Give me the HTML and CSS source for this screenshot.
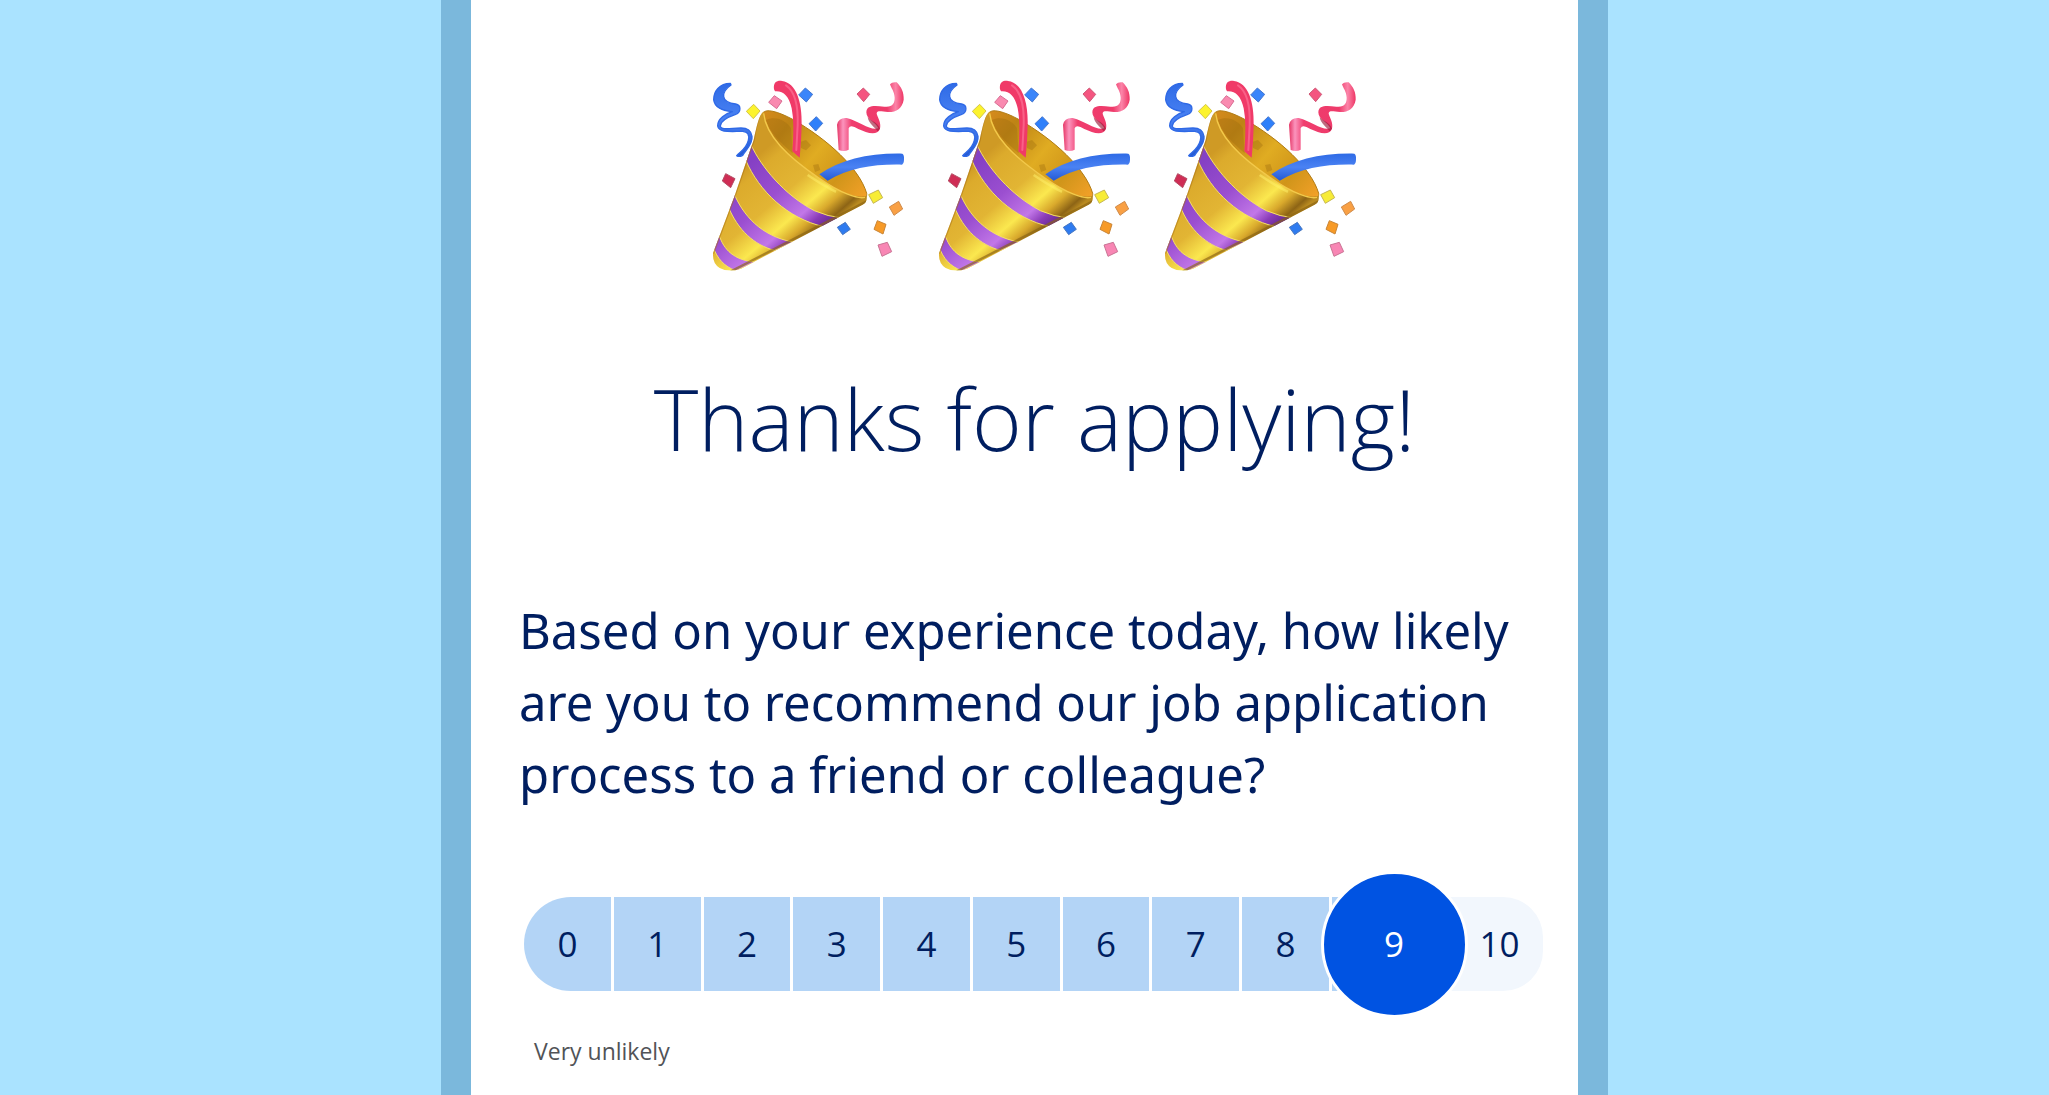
FILE: index.html
```html
<!DOCTYPE html>
<html lang="en">
<head>
<meta charset="utf-8">
<meta name="viewport" content="width=device-width, initial-scale=1">
<title>Thanks for applying!</title>
<link rel="stylesheet" href="styles.css">
</head>
<body>
<svg class="defs" aria-hidden="true">
  <defs>
    <linearGradient id="gold" gradientUnits="userSpaceOnUse" x1="150" y1="330" x2="350" y2="560">
      <stop offset="0" stop-color="#cf9a25"/><stop offset=".12" stop-color="#dcab2c"/><stop offset=".45" stop-color="#e2b534"/><stop offset=".68" stop-color="#fbe84f"/><stop offset=".82" stop-color="#d9a92c"/><stop offset=".94" stop-color="#8d6415"/><stop offset="1" stop-color="#b98a20"/>
    </linearGradient>
    <linearGradient id="violet" gradientUnits="userSpaceOnUse" x1="150" y1="330" x2="350" y2="560">
      <stop offset="0" stop-color="#8540c4"/><stop offset=".4" stop-color="#9b4fd0"/><stop offset=".72" stop-color="#c277e8"/><stop offset=".85" stop-color="#8a3bb8"/><stop offset="1" stop-color="#5c2585"/>
    </linearGradient>
    <linearGradient id="inside" gradientUnits="userSpaceOnUse" x1="220" y1="160" x2="520" y2="410">
      <stop offset="0" stop-color="#d48a1c"/><stop offset=".2" stop-color="#bd8315"/><stop offset=".5" stop-color="#e0ac22"/><stop offset=".75" stop-color="#d0951a"/><stop offset="1" stop-color="#f2a028"/>
    </linearGradient>
    <linearGradient id="pink" x1="0" x2="1" y1="0" y2="0">
      <stop offset="0" stop-color="#e53565"/><stop offset=".09" stop-color="#fb94bd"/><stop offset=".22" stop-color="#f03d6e"/><stop offset=".75" stop-color="#ee3a6a"/><stop offset=".88" stop-color="#fb84a8"/><stop offset="1" stop-color="#ee3564"/>
    </linearGradient>
    <linearGradient id="blue" x1="0" x2="0" y1="0" y2="1">
      <stop offset="0" stop-color="#2f6be6"/><stop offset=".5" stop-color="#4a82f3"/><stop offset="1" stop-color="#2459d4"/>
    </linearGradient>
    <clipPath id="cone"><path d="M218 154C204 166 198 195 188 240L130 410L66 580Q64 610 86 624Q112 638 150 626L515 434Q530 426 527 408C490 420 430 385 385 355C300 298 228 230 218 154Z"/></clipPath>
    <symbol id="popper" viewBox="15 0 678 690">
      <path fill="url(#inside)" stroke="#b17c15" stroke-width="3" d="M216 160C222 144 260 154 305 178C410 238 505 325 527 400C530 432 480 418 385 356C290 292 218 226 216 160Z"/>
      <path fill="#9c6a0e" opacity=".35" d="M330 245L345 240L360 256L345 271L330 264ZM366 315L382 312L388 330L372 336ZM225 180C255 165 290 185 300 205L305 280C265 245 235 215 225 180Z"/>
      <g clip-path="url(#cone)">
        <path fill="url(#gold)" d="M50 140H540V650H50Z"/>
        <path fill="url(#violet)" stroke="#f5df69" stroke-width="3" d="M180 254C210 320 280 405 370 452Q410 470 455 474L398 500C290 475 205 395 164 300Z"/>
        <path fill="url(#violet)" stroke="#f5df69" stroke-width="3" d="M128 398C155 465 210 528 305 546L250 571C190 555 140 510 112 440Z"/>
        <path fill="url(#violet)" stroke="#f5df69" stroke-width="3" d="M84 524C98 570 130 600 190 606L135 632C100 620 78 595 66 560Z"/>
        <path fill="none" stroke="#8a6414" stroke-width="7" opacity=".65" d="M120 634L527 424"/>
        <path fill="none" stroke="#a56d14" stroke-width="7" opacity=".5" d="M210 155Q194 190 188 240L130 410L66 580"/>
        <path fill="none" stroke="#fff06a" stroke-width="8" opacity=".5" d="M350 345Q410 385 435 395"/>
      </g>
      <path fill="none" stroke="#f3c94a" stroke-width="4" d="M218 160C225 228 290 290 385 355C450 400 500 418 522 412"/>
      <path fill="#f03a68" d="M249 88C246 66 259 61 273 63C315 68 334 125 332 195Q331 245 326 293L304 274Q311 190 302 145C294 108 277 92 252 94Z"/>
      <path fill="none" stroke="#ff7a9d" stroke-width="6" opacity=".6" stroke-linecap="round" d="M285 76C313 95 322 135 320 195L316 270"/>
      <path fill="url(#blue)" d="M385 343C450 298 535 279 634 281Q640 284 639 298Q639 311 633 314C550 312 475 324 410 362Z"/>
      <path fill="url(#blue)" stroke="#2f69e6" stroke-width="4" stroke-linejoin="round" d="M118 70C85 70 68 95 68 119C71 143 92 152 124 155C105 160 79 176 80 198C83 219 120 214 155 214C169 215 176 223 172 241C166 266 149 274 137 287Q144 292 155 286C166 268 186 251 183 229C180 210 170 204 150 204C122 204 89 212 88 198C88 181 114 170 134 163C151 156 151 135 134 132C112 130 100 124 98 110C96 94 107 84 120 75Z"/>
      <path fill="url(#pink)" d="M438 194Q443 172 467 174C506 184 538 213 562 205C555 188 526 178 526 157C527 135 549 137 580 140C604 143 612 130 611 112C610 94 601 86 597 73Q603 65 617 67C631 81 639 97 638 119C634 146 614 157 591 156C570 154 557 150 557 161C562 177 571 188 567 206C558 229 528 219 502 207Q478 192 473 205L473 269Q460 276 443 270Z"/>
      <path fill="#9d1d3c" opacity=".65" d="M530 171C540 184 561 187 567 206L560 214C552 202 532 190 530 171Z"/>
      <g stroke-linejoin="round" stroke-width="3">
        <path fill="#f98ab0" stroke="#d96d93" d="M233 127L250 107L273 123L257 146Z"/>
        <path fill="#3a85fa" stroke="#4476cf" d="M323 105L343 84L365 103L346 126Z"/>
        <path fill="#2f80fa" stroke="#4476cf" d="M354 191L376 170L395 190L374 213Z"/>
        <path fill="#fcf32e" stroke="#d5c64a" d="M166 154L188 133L207 153L187 176Z"/>
        <path fill="#f45580" stroke="#cf5675" d="M498 102L517 84L536 103L518 125Z"/>
        <path fill="#cf2d55" stroke="#b44b62" d="M94 363L104 341L132 356L119 383Z"/>
        <path fill="#f7ec36" stroke="#c6b751" d="M533 404L562 390L575 413L547 430Z"/>
        <path fill="#f9a044" stroke="#cf8b4b" d="M595 441L623 424L635 447L609 466Z"/>
        <path fill="#f79a27" stroke="#c98537" d="M559 482L585 493L576 522L549 508Z"/>
        <path fill="#2e7bf0" stroke="#4776c0" d="M439 502L463 487L478 508L455 524Z"/>
        <path fill="#f886b4" stroke="#c97494" d="M561 555L589 547L602 575L573 589Z"/>
      </g>
    </symbol>
  </defs>
</svg>

<main class="panel">
  <div class="poppers" role="img" aria-label="Party poppers">
    <svg class="popper"><use href="#popper"/></svg>
    <svg class="popper"><use href="#popper"/></svg>
    <svg class="popper"><use href="#popper"/></svg>
  </div>
  <h1 class="title">Thanks for applying!</h1>
  <form class="survey">
    <p class="question" id="question">Based on your experience today, how likely are you to recommend our job application process to a friend or colleague?</p>
    <div class="scale" role="radiogroup" aria-labelledby="question">
      <label class="step"><input type="radio" name="score" value="0"><span class="num">0</span></label>
      <label class="step"><input type="radio" name="score" value="1"><span class="num">1</span></label>
      <label class="step"><input type="radio" name="score" value="2"><span class="num">2</span></label>
      <label class="step"><input type="radio" name="score" value="3"><span class="num">3</span></label>
      <label class="step"><input type="radio" name="score" value="4"><span class="num">4</span></label>
      <label class="step"><input type="radio" name="score" value="5"><span class="num">5</span></label>
      <label class="step"><input type="radio" name="score" value="6"><span class="num">6</span></label>
      <label class="step"><input type="radio" name="score" value="7"><span class="num">7</span></label>
      <label class="step"><input type="radio" name="score" value="8"><span class="num">8</span></label>
      <label class="step selected"><input type="radio" name="score" value="9" checked><span class="num">9</span></label>
      <label class="step last"><input type="radio" name="score" value="10"><span class="num">10</span></label>
    </div>
    <p class="hint">Very unlikely</p>
  </form>
</main>
</body>
</html>
```

FILE: styles.css
```css
* {
  box-sizing: border-box;
}

body {
  margin: 0;
  background: #aae3ff;
  color: #001e60;
  font-family: "Open Sans", "Noto Sans", sans-serif;
}

.defs {
  position: absolute;
  width: 0;
  height: 0;
}

.panel {
  max-width: 1167px;
  min-height: 100vh;
  margin: 0 auto;
  padding: 60px 28px 28px 48px;
  background: #fff;
  border: solid #7bb8dc;
  border-width: 0 30px;
}

.poppers {
  display: flex;
  justify-content: center;
}

.popper {
  width: 226px;
  height: 230px;
}

.title {
  margin: 70px 0 0;
  font-size: 85px;
  font-weight: 300;
  line-height: 116px;
  text-align: center;
}

.question {
  margin: 118px 0 0;
  font-family: "Noto Sans", "Open Sans", sans-serif;
  font-size: 49px;
  line-height: 72px;
}

.scale {
  display: grid;
  grid-template-columns: repeat(9, 1fr) 124px 87px;
  align-items: center;
  margin: 63px 7px 0 5px;
  min-height: 142px;
}

.step {
  position: relative;
  display: flex;
  align-items: center;
  justify-content: center;
  height: 94px;
  border-right: 3px solid #fff;
  background: #b3d4f6;
  font-size: 35px;
  line-height: 48px;
  cursor: pointer;
}

.step input {
  position: absolute;
  inset: 0;
  margin: 0;
  appearance: none;
  cursor: pointer;
}

.step:first-child {
  border-radius: 47px 0 0 47px;
}

.step.last {
  border-right: 0;
  border-radius: 0 40px 40px 0;
  background: #f2f7fd;
}

.step.selected {
  z-index: 1;
  border-right: 0;
  background: linear-gradient(90deg, #b3d4f6 50%, #f2f7fd 50%);
  color: #fff;
}

.selected .num {
  flex: none;
  display: grid;
  place-items: center;
  width: 147px;
  height: 147px;
  border: 3px solid #fff;
  border-radius: 50%;
  background: #0053e2;
}

.hint {
  margin: 20px 15px 0;
  color: #515357;
  font-size: 23px;
  line-height: 32px;
}
```
